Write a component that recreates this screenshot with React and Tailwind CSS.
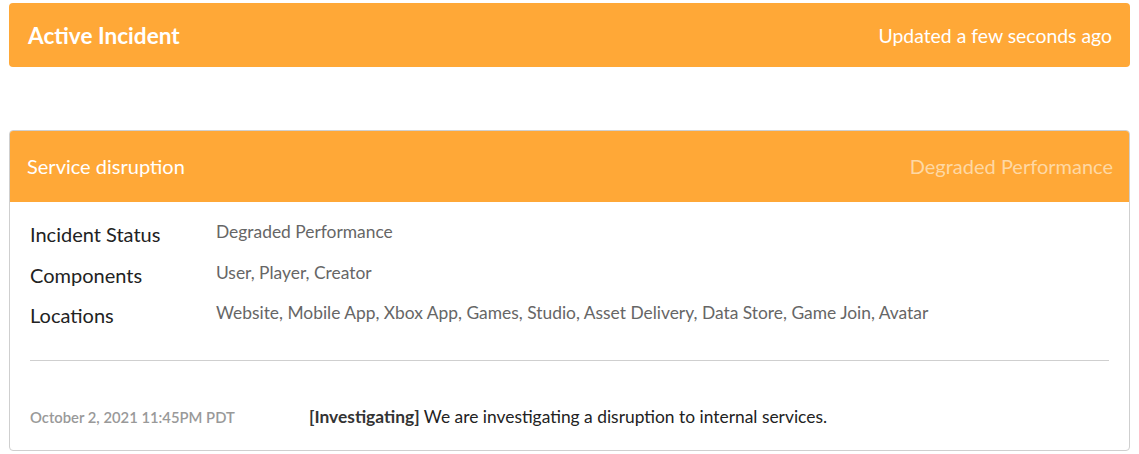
import React from 'react';

const rows = [
  ['Incident Status', 'Degraded Performance'],
  ['Components', 'User, Player, Creator'],
  ['Locations', 'Website, Mobile App, Xbox App, Games, Studio, Asset Delivery, Data Store, Game Join, Avatar'],
];

export default function App() {
  return (
    <div className="w-[1139px] h-[454px] bg-white px-[9px] pt-[3px] font-['Lato','Liberation_Sans',sans-serif]">
      {/* Active incident banner */}
      <div className="h-[64px] rounded-[4px] bg-[#ffa837] flex items-center justify-between pl-[19px] pr-[18px] pt-[2px]">
        <h1 className="text-[22.6px] font-bold text-white">Active Incident</h1>
        <span className="text-[19.4px] text-white">Updated a few seconds ago</span>
      </div>

      {/* Incident card */}
      <div className="mt-[63px] rounded-[4px] border border-[#cfcfcf] overflow-hidden">
        <div className="h-[72px] bg-[#ffa837] flex items-center justify-between pl-[18px] pr-[17px] -mx-px -mt-px">
          <h2 className="text-[20px] text-white">Service disruption</h2>
          <span className="text-[20px] text-[#fed8a4]">Degraded Performance</span>
        </div>

        <div className="px-[20px] pt-[20px]">
          <div className="flex flex-col gap-[16.5px]">
            {rows.map(([label, value]) => (
              <div key={label} className="flex items-start h-[24px]">
                <span className="w-[186px] text-[20px] text-[#222] leading-[24px]">{label}</span>
                <span className="text-[17.4px] text-[#666] leading-[20px]">{value}</span>
              </div>
            ))}
          </div>

          <div className="mt-[33px] border-t border-[#cfcfcf]"></div>

          <div className="flex items-center h-[89px] pt-[24px]">
            <span className="w-[279px] text-[14.8px] font-semibold text-[#999]">October 2, 2021 11:45PM PDT</span>
            <p className="text-[17.4px] text-[#222]">
              <span className="font-bold text-[#333]">[Investigating]</span> We are investigating a disruption to internal services.
            </p>
          </div>
        </div>
      </div>
    </div>
  );
}
